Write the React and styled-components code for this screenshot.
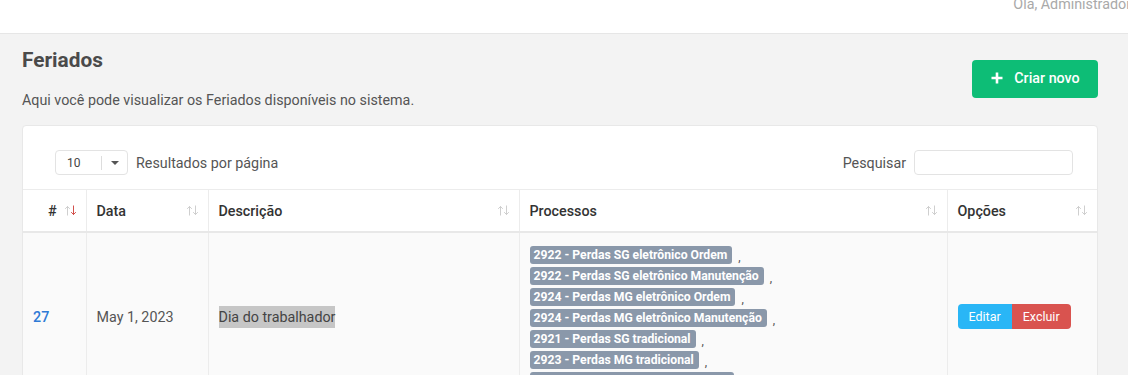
import React from "react";
import styled, { createGlobalStyle } from "styled-components";

const Global = createGlobalStyle`
  html, body { margin: 0; padding: 0; background: #f3f3f3; }
  body { font-family: Roboto, "Liberation Sans", Arial, sans-serif; color: #555; }
  * { box-sizing: border-box; }
`;

const TopBar = styled.header`
  height: 34px;
  background: #fff;
  border-bottom: 1px solid #e6e6e6;
  display: flex;
  justify-content: flex-end;
  align-items: flex-start;
  overflow: hidden;
`;

const Greeting = styled.span`
  font-size: 14.3px;
  line-height: 16px;
  color: #a9a9a9;
  margin-top: -4px;
  margin-right: -3px;
  white-space: nowrap;
`;

const Main = styled.main`
  padding: 14px 30px 0 22px;
`;

const PageHead = styled.div`
  display: flex;
  justify-content: space-between;
  align-items: center;
`;

const Titles = styled.div`
  display: flex;
  flex-direction: column;
`;

const Title = styled.h1`
  margin: 0;
  font-size: 20.8px;
  line-height: 24px;
  font-weight: 700;
  color: #4a4a4a;
`;

const Subtitle = styled.p`
  margin: 19px 0 0;
  font-size: 14.3px;
  line-height: 18px;
  color: #555;
`;

const CreateButton = styled.button`
  width: 126px;
  height: 38px;
  border: none;
  border-radius: 4px;
  background: #0dbd76;
  color: #fff;
  font-family: inherit;
  font-size: 14.3px;
  font-weight: 500;
  display: flex;
  align-items: center;
  justify-content: center;
  gap: 11px;
  padding: 0 0 1px 1px;
  cursor: pointer;
`;

const Card = styled.section`
  margin-top: 16px;
  background: #fff;
  border: 1px solid #e8e8e8;
  border-radius: 4px;
  overflow: hidden;
`;

const Controls = styled.div`
  display: flex;
  justify-content: space-between;
  align-items: center;
  padding: 24px 24px 14px 32px;
`;

const Group = styled.label`
  display: flex;
  align-items: center;
  gap: 8px;
  font-size: 14.3px;
  color: #555;
`;

const SelectBox = styled.div`
  width: 73px;
  height: 25px;
  border: 1px solid #e3e3e3;
  border-radius: 4px;
  display: flex;
  align-items: center;
  font-size: 12px;
  color: #444;
  padding-left: 11px;
`;

const SelectValue = styled.span`
  flex: 1;
`;

const SelectDivider = styled.span`
  width: 1px;
  height: 14px;
  background: #ddd;
`;

const Caret = styled.span`
  width: 25px;
  display: flex;
  justify-content: center;
  &::after {
    content: "";
    border-left: 4px solid transparent;
    border-right: 4px solid transparent;
    border-top: 4px solid #555;
  }
`;

const SearchInput = styled.input`
  width: 159px;
  height: 25px;
  border: 1px solid #e3e3e3;
  border-radius: 4px;
  outline: none;
`;

const Table = styled.table`
  width: 100%;
  table-layout: fixed;
  border-collapse: collapse;
  font-size: 14.3px;
`;

const Th = styled.th`
  height: 42px;
  padding: 1px 10px 0;
  text-align: left;
  font-weight: 500;
  color: #333;
  border-top: 1px solid #ececec;
  border-bottom: 2px solid #e8e8e8;
  border-left: 1px solid #ececec;
  &:first-child { border-left: none; }
`;

const ThInner = styled.div`
  display: flex;
  align-items: center;
  justify-content: ${(p) => (p.$right ? "flex-end" : "space-between")};
  gap: 7px;
`;

const Tr = styled.tr`
  background: #fafafa;
`;

const Td = styled.td`
  padding: ${(p) => (p.$list ? "13px 10px 8px" : "8px 10px")};
  vertical-align: middle;
  border-left: 1px solid #ececec;
  &:first-child { border-left: none; }
  color: #555;
`;

const IdLink = styled.a`
  color: #2f7ad6;
  font-weight: 500;
  text-decoration: none;
`;

const Highlight = styled.span`
  background: #c6c6c6;
  color: #444;
  padding: 3px 0;
`;

const ProcList = styled.div`
  display: flex;
  flex-direction: column;
`;

const ProcItem = styled.div`
  height: 21px;
  display: flex;
  align-items: flex-start;
`;

const Badge = styled.span`
  display: inline-block;
  height: 18px;
  line-height: 18px;
  padding: 0 5px 0 4px;
  border-radius: 3px;
  background: #8a98aa;
  color: #fff;
  font-size: 12.2px;
  font-weight: 700;
  white-space: nowrap;
  margin-right: 6px;
`;

const Comma = styled.span`
  font-size: 12px;
  line-height: 22px;
  color: #555;
`;

const BtnGroup = styled.div`
  display: flex;
`;

const ActionButton = styled.button`
  height: 25px;
  border: none;
  font-family: inherit;
  font-size: 12.5px;
  color: #fff;
  padding: 0 ${(p) => p.$pad}px;
  background: ${(p) => p.$bg};
  border-radius: ${(p) => (p.$first ? "4px 0 0 4px" : "0 4px 4px 0")};
`;

const SortIcon = ({ active }) => (
  <svg width="12" height="11" viewBox="0 0 12 11" style={{ flexShrink: 0 }}>
    <g strokeWidth="1" fill="none" strokeLinecap="square">
      <path d="M3.5 1.5 V10 M1.5 3.5 L3.5 1.5 L5.5 3.5" stroke="#cfcfcf" />
      <path
        d="M9.5 1 V9.5 M7.5 7.5 L9.5 9.5 L11.5 7.5"
        stroke={active ? "#d2504c" : "#cfcfcf"}
      />
    </g>
  </svg>
);

const PlusIcon = () => (
  <svg width="12" height="12" viewBox="0 0 12 12">
    <path d="M6 0.5 V11.5 M0.5 6 H11.5" stroke="#fff" strokeWidth="2.6" />
  </svg>
);

const processos = [
  "2922 - Perdas SG eletrônico Ordem",
  "2922 - Perdas SG eletrônico Manutenção",
  "2924 - Perdas MG eletrônico Ordem",
  "2924 - Perdas MG eletrônico Manutenção",
  "2921 - Perdas SG tradicional",
  "2923 - Perdas MG tradicional",
  "2925 - Perdas SG eletrônico Leitura",
];

const columns = [
  { key: "#", width: 63, right: true, active: true },
  { key: "Data", width: 122 },
  { key: "Descrição", width: 311 },
  { key: "Processos", width: 428 },
  { key: "Opções", width: 150 },
];

export default function App() {
  return (
    <>
      <Global />
      <TopBar>
        <Greeting>Olá, Administrador</Greeting>
      </TopBar>
      <Main>
        <PageHead>
          <Titles>
            <Title>Feriados</Title>
            <Subtitle>Aqui você pode visualizar os Feriados disponíveis no sistema.</Subtitle>
          </Titles>
          <CreateButton>
            <PlusIcon />
            Criar novo
          </CreateButton>
        </PageHead>
        <Card>
          <Controls>
            <Group>
              <SelectBox>
                <SelectValue>10</SelectValue>
                <SelectDivider />
                <Caret />
              </SelectBox>
              Resultados por página
            </Group>
            <Group>
              Pesquisar
              <SearchInput type="search" />
            </Group>
          </Controls>
          <Table>
            <colgroup>
              {columns.map((c) => (
                <col key={c.key} style={{ width: c.width }} />
              ))}
            </colgroup>
            <thead>
              <tr>
                {columns.map((c) => (
                  <Th key={c.key}>
                    <ThInner $right={c.right}>
                      <span>{c.key}</span>
                      <SortIcon active={c.active} />
                    </ThInner>
                  </Th>
                ))}
              </tr>
            </thead>
            <tbody>
              <Tr>
                <Td>
                  <IdLink href="#">27</IdLink>
                </Td>
                <Td>May 1, 2023</Td>
                <Td>
                  <Highlight>Dia do trabalhador</Highlight>
                </Td>
                <Td $list>
                  <ProcList>
                    {processos.map((p) => (
                      <ProcItem key={p}>
                        <Badge>{p}</Badge>
                        <Comma>,</Comma>
                      </ProcItem>
                    ))}
                  </ProcList>
                </Td>
                <Td>
                  <BtnGroup>
                    <ActionButton $first $bg="#29b6f6" $pad={11}>
                      Editar
                    </ActionButton>
                    <ActionButton $bg="#d9534f" $pad={11}>
                      Excluir
                    </ActionButton>
                  </BtnGroup>
                </Td>
              </Tr>
            </tbody>
          </Table>
        </Card>
      </Main>
    </>
  );
}
